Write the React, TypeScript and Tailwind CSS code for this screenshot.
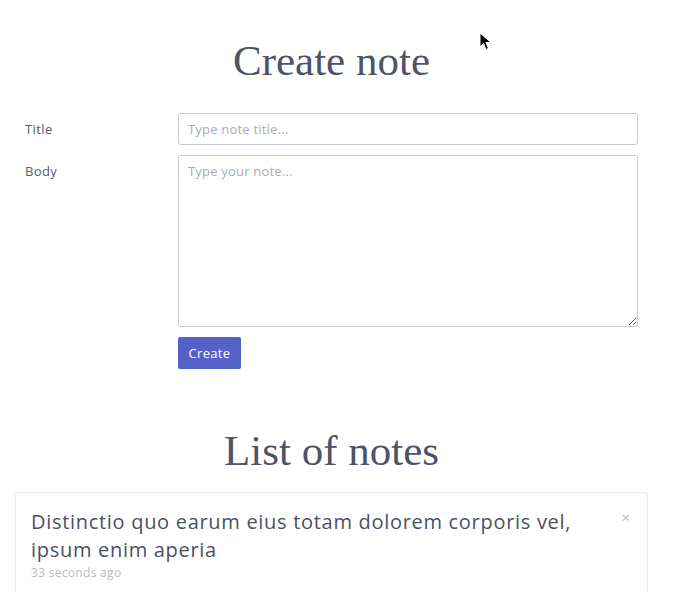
import React from 'react';

const serif = { fontFamily: '"Liberation Serif", "DejaVu Serif", serif' };

export default function App() {
  return (
    <div className="relative min-h-[592px] bg-white text-[#4a5068]" style={{ fontFamily: '"Open Sans", "Liberation Sans", sans-serif' }}>
      <div className="ml-[15px] w-[633px]">
        <h1 className="pt-[36px] text-center text-[43px] leading-[50px] text-[#4d5368]" style={serif}>
          Create note
        </h1>

        <form className="mt-[27px] px-[10px]">
          <div className="flex items-start">
            <label className="w-[153px] pt-[7px] text-[13px] tracking-[0.4px] text-[#555a6e]">Title</label>
            <input
              className="h-[32px] w-[460px] rounded-[3px] border border-[#c8cad6] px-[9px] text-[13px] tracking-[0.2px] outline-none placeholder:text-[#a9acb8]"
              placeholder="Type note title..."
            />
          </div>
          <div className="mt-[10px] flex items-start">
            <label className="w-[153px] pt-[7px] text-[13px] tracking-[0.4px] text-[#555a6e]">Body</label>
            <textarea
              className="h-[172px] w-[460px] rounded-[3px] border border-[#c8cad6] px-[9px] py-[6px] text-[13px] tracking-[0.2px] outline-none placeholder:text-[#a9acb8]"
              placeholder="Type your note..."
            />
          </div>
          <div className="mt-[10px] pl-[153px]">
            <button type="button" className="h-[32px] w-[63px] rounded-[2px] bg-[#5561c9] pt-[1px] text-[13px] tracking-[0.3px] text-white">
              Create
            </button>
          </div>
        </form>

        <h2 className="mt-[57px] text-center text-[43px] leading-[50px] text-[#4d5368]" style={serif}>
          List of notes
        </h2>

        <div className="mt-[16px] h-[120px] rounded-[3px] border border-[#ececf0] px-[15px] pt-[15px]">
          <div className="flex items-start justify-between">
            <p className="w-[560px] text-[20px] leading-[28px] tracking-[0.7px] text-[#4a5068]">
              Distinctio quo earum eius totam dolorem corporis vel, ipsum enim aperia
            </p>
            <span className="mr-[2px] mt-[-2px] text-[15px] text-[#b5b8c4]">×</span>
          </div>
          <div className="text-[12px] tracking-[0.3px] text-[#b8bbc6]">33 seconds ago</div>
        </div>
      </div>

      <svg className="absolute left-[479px] top-[32px]" width="14" height="20" viewBox="0 0 14 20">
        <path d="M1 1 L1 15 L4.5 11.5 L7 17.5 L9.5 16.5 L7 10.5 L12 10.5 Z" fill="#000" stroke="#fff" strokeWidth="1" />
      </svg>
    </div>
  );
}
